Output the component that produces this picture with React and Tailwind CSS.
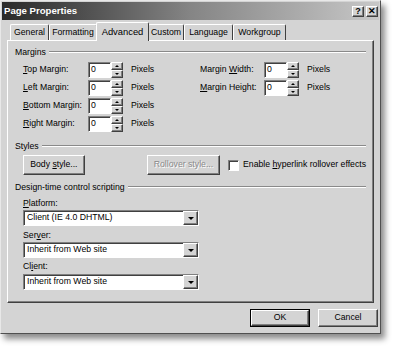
import React from "react";

const raised =
  "border border-t-white border-l-white border-r-[#404040] border-b-[#404040] shadow-[inset_-1px_-1px_0_#808080]";
const sunken =
  "border border-t-[#808080] border-l-[#808080] border-r-white border-b-white shadow-[inset_1px_1px_0_#404040]";

const U = ({ children }) => <span className="underline underline-offset-[1px]">{children}</span>;

const GroupHeader = ({ children, className = "" }) => (
  <div className={"flex items-center h-[12px] " + className}>
    <span className="pr-[3px] leading-none whitespace-nowrap">{children}</span>
    <div className="flex-1 h-[2px] border-t border-t-[#8a8a8a] border-b border-b-white" />
  </div>
);

const Spinner = () => (
  <div className="flex flex-col w-[12px] h-[16px]">
    <div className={"flex-1 flex items-center justify-center bg-[#d4d4d4] " + raised}>
      <div className="w-0 h-0 border-l-[2px] border-r-[2px] border-b-[2px] border-l-transparent border-r-transparent border-b-black" />
    </div>
    <div className={"flex-1 flex items-center justify-center bg-[#d4d4d4] " + raised}>
      <div className="w-0 h-0 border-l-[2px] border-r-[2px] border-t-[2px] border-l-transparent border-r-transparent border-t-black" />
    </div>
  </div>
);

const NumField = () => (
  <div className="flex items-center">
    <div className={"w-[23px] h-[16px] bg-white pl-[2px] flex items-center " + sunken}>0</div>
    <Spinner />
  </div>
);

const MarginRow = ({ label, labelW }) => (
  <div className="flex items-center h-[16px]">
    <div className="whitespace-nowrap" style={{ width: labelW }}>{label}</div>
    <NumField />
    <span className="ml-[8px]">Pixels</span>
  </div>
);

const Select = ({ value }) => (
  <div className={"w-[176px] h-[16px] bg-white flex items-center justify-between " + sunken}>
    <span className="pl-[3px] whitespace-nowrap">{value}</span>
    <div className={"w-[15px] h-[14px] bg-[#d4d4d4] flex items-center justify-center " + raised}>
      <div className="w-0 h-0 border-l-[3px] border-r-[3px] border-t-[3px] border-l-transparent border-r-transparent border-t-black" />
    </div>
  </div>
);

const tabs = [
  { name: "General", w: 39 },
  { name: "Formatting", w: 48 },
  { name: "Advanced", w: 51, active: true },
  { name: "Custom", w: 36 },
  { name: "Language", w: 49 },
  { name: "Workgroup", w: 53 },
];

export default function App() {
  return (
    <div
      className="w-[395px] h-[347px] bg-white text-[8.7px] text-black"
      style={{ fontFamily: '"Liberation Sans", Arial, sans-serif' }}
    >
      <div className="w-[381px] h-[334px] bg-[#d4d4d4] border border-t-[#e8e8e8] border-l-[#e8e8e8] border-r-[#505050] border-b-[#505050] shadow-[4px_5px_6px_rgba(0,0,0,0.45)] flex flex-col">
        {/* Title bar */}
        <div className="h-[18px] mx-[1px] mt-[1px] bg-gradient-to-r from-[#2a2a2a] via-[#858585] to-[#c8c8c8] flex items-center justify-between pl-[2px] pr-[1px]">
          <span className="text-white font-bold text-[9.6px]">Page Properties</span>
          <div className="flex gap-[2px]">
            <div className={"w-[12px] h-[11px] bg-[#d4d4d4] flex items-center justify-center font-bold text-[9px] leading-none " + raised}>?</div>
            <div className={"w-[12px] h-[11px] bg-[#d4d4d4] flex items-center justify-center font-bold text-[9px] leading-none " + raised}>✕</div>
          </div>
        </div>

        {/* Tabs */}
        <div className="flex items-end h-[20px] pl-[9px]">
          {tabs.map((t) =>
            t.active ? (
              <div
                key={t.name}
                style={{ width: t.w + 2 }}
                className="relative z-10 -mx-[1px] -mb-[1px] h-[19px] bg-[#d4d4d4] border border-b-0 border-t-white border-l-white border-r-[#404040] rounded-t-[2px] flex items-start justify-center pt-[2px] text-[9.4px]"
              >
                {t.name}
              </div>
            ) : (
              <div
                key={t.name}
                style={{ width: t.w }}
                className="h-[16px] bg-[#d4d4d4] border border-b-0 border-t-white border-l-white border-r-[#404040] rounded-t-[2px] flex items-center justify-center"
              >
                {t.name}
              </div>
            )
          )}
        </div>

        {/* Panel */}
        <div className={"mx-[6px] h-[263px] px-[7px] pt-[5px] " + raised}>
          <GroupHeader>Margins</GroupHeader>
          <div className="flex mt-[4px] pl-[8px]">
            <div className="flex flex-col gap-[2px] w-[177px]">
              <MarginRow labelW={65} label={<><U>T</U>op Margin:</>} />
              <MarginRow labelW={65} label={<><U>L</U>eft Margin:</>} />
              <MarginRow labelW={65} label={<><U>B</U>ottom Margin:</>} />
              <MarginRow labelW={65} label={<><U>R</U>ight Margin:</>} />
            </div>
            <div className="flex flex-col gap-[2px]">
              <MarginRow labelW={64} label={<>Margin <U>W</U>idth:</>} />
              <MarginRow labelW={64} label={<><U>M</U>argin Height:</>} />
            </div>
          </div>

          <GroupHeader className="mt-[8px]">Styles</GroupHeader>
          <div className="flex items-center mt-[3px] pl-[8px]">
            <div className={"w-[63px] h-[20px] flex items-center justify-center whitespace-pre " + raised}>
              <span>Body <U>s</U>tyle...</span>
            </div>
            <div
              className={"ml-[62px] w-[75px] h-[20px] flex items-center justify-center whitespace-nowrap text-[#8a8a8a] [text-shadow:1px_1px_0_#fff] " + raised}
            >
              Rollover style...
            </div>
            <div className={"ml-[8px] w-[11px] h-[11px] bg-white " + sunken} />
            <span className="ml-[4px] whitespace-nowrap">
              Enable <U>h</U>yperlink rollover effects
            </span>
          </div>

          <GroupHeader className="mt-[6px]">Design-time control scripting</GroupHeader>
          <div className="pl-[8px]">
            <div className="mt-[4px] h-[12px] leading-[12px]">
              <U>P</U>latform:
            </div>
            <div className="mt-[1px]">
              <Select value="Client (IE 4.0 DHTML)" />
            </div>
            <div className="mt-[3px] h-[12px] leading-[12px]">
              Ser<U>v</U>er:
            </div>
            <div className="mt-[1px]">
              <Select value="Inherit from Web site" />
            </div>
            <div className="mt-[2px] h-[12px] leading-[12px]">
              Cl<U>i</U>ent:
            </div>
            <div className="mt-[2px]">
              <Select value="Inherit from Web site" />
            </div>
          </div>
        </div>

        {/* Bottom buttons */}
        <div className="flex justify-end gap-[8px] mt-[6px] pr-[2px]">
          <div className="w-[60px] h-[18px] border border-black">
            <div className={"w-full h-full flex items-center justify-center " + raised}>OK</div>
          </div>
          <div className={"w-[60px] h-[18px] flex items-center justify-center " + raised}>Cancel</div>
        </div>
      </div>
    </div>
  );
}
